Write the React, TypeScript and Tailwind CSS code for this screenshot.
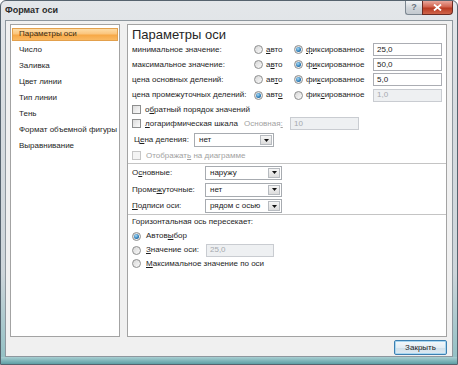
import React from "react";

function Radio({ checked, disabled }: { checked?: boolean; disabled?: boolean }) {
  return (
    <span
      className={
        "inline-flex h-[9px] w-[9px] shrink-0 items-center justify-center rounded-full border " +
        (disabled
          ? "border-[#bcbcbc] bg-[#f4f4f4]"
          : "border-[#8e8f8f] bg-[linear-gradient(135deg,#d6d6d6,#fbfbfb)]")
      }
    >
      {checked && (
        <span className="h-[5px] w-[5px] rounded-full bg-[radial-gradient(circle_at_40%_35%,#a9dcf7,#2b7cb8_60%,#174e7c)]" />
      )}
    </span>
  );
}

function Check({ disabled }: { disabled?: boolean }) {
  return (
    <span
      className={
        "inline-block h-[9px] w-[9px] shrink-0 border " +
        (disabled
          ? "border-[#c6c6c6] bg-[#f4f4f4]"
          : "border-[#8e8f8f] bg-[linear-gradient(135deg,#dcdcdc,#fbfbfb)]")
      }
    />
  );
}

function Field({ value, w, disabled }: { value: string; w: string; disabled?: boolean }) {
  return (
    <div
      className={
        "flex h-[13px] items-center border pl-[3px] " +
        w +
        (disabled
          ? " border-[#c9ccd1] bg-[#eef0f2] text-[#a5a9ae]"
          : " border-[#abadb3] bg-white text-[#1b1b1b]")
      }
    >
      {value}
    </div>
  );
}

function Select({ value, w }: { value: string; w: string }) {
  return (
    <div className={"flex h-[14px] items-center border border-[#a7abb0] bg-white " + w}>
      <span className="flex-1 pl-[4px] text-[#1b1b1b]">{value}</span>
      <span className="mr-[1px] flex h-[10px] w-[12px] items-center justify-center border border-[#b7bbc0] bg-[linear-gradient(180deg,#f6f6f6,#dcdcdc)]">
        <svg width="5" height="3" viewBox="0 0 5 3">
          <path d="M0 0h5L2.5 3z" fill="#111" />
        </svg>
      </span>
    </div>
  );
}

const menu = [
  "Параметры оси",
  "Число",
  "Заливка",
  "Цвет линии",
  "Тип линии",
  "Тень",
  "Формат объемной фигуры",
  "Выравнивание",
];

const rows = [
  { label: "минимальное значение:", auto: <><u>а</u>вто</>, fixed: <><u>ф</u>иксированное</>, value: "25,0", fixedOn: true },
  { label: "максимальное значение:", auto: <>а<u>в</u>то</>, fixed: <>ф<u>и</u>ксированное</>, value: "50,0", fixedOn: true },
  { label: "цена основных делений:", auto: <>ав<u>т</u>о</>, fixed: <>фи<u>к</u>сированное</>, value: "5,0", fixedOn: true },
  { label: "цена промежуточных делений:", auto: <>авт<u>о</u></>, fixed: <>фик<u>с</u>ированное</>, value: "1,0", fixedOn: false },
];

export default function App() {
  return (
    <div className="flex h-[365px] w-[458px] flex-col overflow-hidden rounded-t-[6px] border border-[#56636e] bg-[linear-gradient(180deg,#e4e7ea_0%,#d7dce0_30%,#cdd5da_75%,#8fbfc3_100%)] font-['Liberation_Sans',Arial,sans-serif] text-[8px] leading-none text-[#1e1e1e]">
      {/* title bar */}
      <div className="flex h-[19px] shrink-0 items-start justify-between">
        <div className="pl-[4px] pt-[5px] text-[9px] font-semibold text-[#2a2a2a]">Формат оси</div>
        <div className="mr-[4px] flex">
          <div className="flex h-[14px] w-[17px] items-center justify-center rounded-bl-[3px] border border-r-0 border-t-0 border-[#7c8791] bg-[linear-gradient(180deg,#f3f5f7,#cfd4d9_55%,#c3c9cf)] text-[9px] font-bold text-[#6a747e]">
            ?
          </div>
          <div className="flex h-[14px] w-[31px] items-center justify-center rounded-br-[4px] border border-t-0 border-[#6b2b22] bg-[linear-gradient(180deg,#e9a79c,#d2644f_45%,#b83a22_55%,#d0654a)]">
            <svg width="9" height="7" viewBox="0 0 9 7">
              <path d="M1 0.5L8 6.5M8 0.5L1 6.5" stroke="#fff" strokeWidth="1.8" />
            </svg>
          </div>
        </div>
      </div>

      {/* body */}
      <div className="mx-[4px] flex h-[337px] shrink-0 flex-col border border-[#8e979e] bg-[#f0f0f0] px-[4px] pt-[3px]">
        <div className="flex h-[313px] gap-[7px]">
          {/* left list */}
          <div className="w-[110px] border border-[#a3a3a3] bg-white p-[1px] pt-[1px]">
            {menu.map((m, i) => (
              <div key={m} className="flex h-[16px] items-center">
                {i === 0 ? (
                  <div className="flex h-[13px] w-full items-center border border-[#e3a04c] bg-[linear-gradient(180deg,#fddca6_0%,#fbc57c_45%,#f7a846_55%,#f9b962_100%)] pl-[6px] text-[#3a2a10]">
                    {m}
                  </div>
                ) : (
                  <div className="pl-[7px]">{m}</div>
                )}
              </div>
            ))}
          </div>

          {/* right panel */}
          <div className="flex w-[320px] flex-col border border-[#a3a3a3] bg-white px-[4px] pt-[2px]">
            <div className="flex h-[15px] items-center text-[13px] text-[#262626]">Параметры оси</div>
            {rows.map((r, i) => (
              <div key={i} className={"flex items-center " + (i === 3 ? "h-[16px]" : "h-[15px]")}>
                <div className="w-[122px]">{r.label}</div>
                <div className="flex w-[40px] items-center gap-[3px]">
                  <Radio checked={!r.fixedOn} />
                  <span>{r.auto}</span>
                </div>
                <div className="flex w-[79px] items-center gap-[3px]">
                  <Radio checked={r.fixedOn} />
                  <span>{r.fixed}</span>
                </div>
                <Field value={r.value} w="w-[69px]" disabled={!r.fixedOn} />
              </div>
            ))}
            <div className="flex h-[13px] items-center gap-[4px]">
              <Check />
              <span>
                о<u>б</u>ратный порядок значений
              </span>
            </div>
            <div className="flex h-[15px] items-center">
              <div className="flex w-[112px] items-center gap-[4px]">
                <Check />
                <span>
                  <u>л</u>огарифмическая шкала
                </span>
              </div>
              <div className="w-[46px] text-[#a2a2a2]">
                Основная<u>:</u>
              </div>
              <Field value="10" w="w-[69px]" disabled />
            </div>
            <div className="flex h-[18px] items-center pl-[2px]">
              <div className="w-[60px]">
                Ц<u>е</u>на деления:
              </div>
              <Select value="нет" w="w-[80px]" />
            </div>
            <div className="flex h-[13px] items-center gap-[5px] text-[#a2a2a2]">
              <Check disabled />
              <span>
                Отображат<u>ь</u> на диаграмме
              </span>
            </div>
            <div className="-mx-[4px] mt-[1px] h-[1px] bg-[#c4c4c4]" />
            {[
              { l: <>О<u>с</u>новные:</>, v: "наружу" },
              { l: <>Проме<u>ж</u>уточные:</>, v: "нет" },
              { l: <><u>П</u>одписи оси:</>, v: "рядом с осью" },
            ].map((g, i) => (
              <div key={i} className={"flex items-center " + (i === 2 ? "h-[16px]" : "h-[17px]")}>
                <div className="w-[73px]">{g.l}</div>
                <Select value={g.v} w="w-[77px]" />
              </div>
            ))}
            <div className="-mx-[4px] h-[1px] bg-[#c4c4c4]" />
            <div className="flex h-[14px] items-center">Горизонтальная ось пересекает:</div>
            <div className="flex h-[14px] items-center gap-[5px]">
              <Radio checked />
              <span>
                Автов<u>ы</u>бор
              </span>
            </div>
            <div className="flex h-[14px] items-center">
              <div className="flex w-[74px] items-center gap-[5px]">
                <Radio />
                <span>
                  <u>З</u>начение оси:
                </span>
              </div>
              <Field value="25,0" w="w-[68px]" disabled />
            </div>
            <div className="flex h-[13px] items-center gap-[5px]">
              <Radio />
              <span>
                <u>М</u>аксимальное значение по оси
              </span>
            </div>
          </div>
        </div>

        {/* footer */}
        <div className="mt-[3px] flex justify-end pr-[1px]">
          <div className="flex h-[15px] w-[53px] items-center justify-center rounded-[2px] border border-[#3c7fb1] bg-[linear-gradient(180deg,#f4f8fb,#e3edf4_50%,#cfdfea_52%,#dde9f1)] shadow-[inset_0_0_0_1px_#a8d6f0]">
            Закрыть
          </div>
        </div>
      </div>

      {/* bottom frame */}
      <div className="flex-1 bg-[linear-gradient(180deg,#a9cfd2,#5d9fa5)]" />
    </div>
  );
}
